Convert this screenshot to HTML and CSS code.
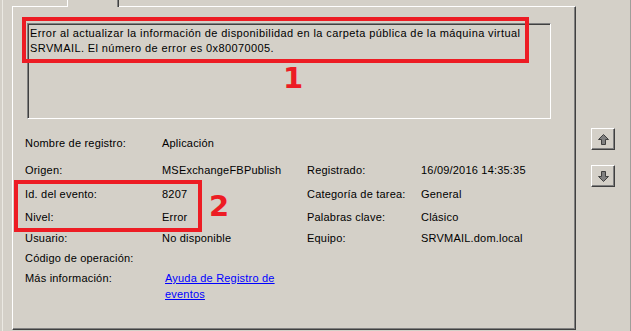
FILE: index.html
```html
<!DOCTYPE html>
<html lang="es">
<head>
<meta charset="utf-8">
<title>Detalles del evento</title>
<link rel="stylesheet" href="styles.css">
</head>
<body>
<div class="window">
  <div class="main">
    <div class="tabstrip"><div class="tab">Detalles</div></div>
    <div class="panel">
      <div class="textbox">
        <p class="message">Error al actualizar la información de disponibilidad en la carpeta pública de la máquina virtual<br>SRVMAIL. El número de error es 0x80070005.</p>
      </div>
      <div class="fields">
        <span class="label">Nombre de registro:</span><span class="value wide">Aplicación</span>
        <span class="label">Origen:</span><span class="value">MSExchangeFBPublish</span><span class="label">Registrado:</span><span class="value">16/09/2016 14:35:35</span>
        <span class="label">Id. del evento:</span><span class="value">8207</span><span class="label">Categoría de tarea:</span><span class="value">General</span>
        <span class="label">Nivel:</span><span class="value">Error</span><span class="label">Palabras clave:</span><span class="value">Clásico</span>
        <span class="label">Usuario:</span><span class="value">No disponible</span><span class="label">Equipo:</span><span class="value">SRVMAIL.dom.local</span>
        <span class="label full">Código de operación:</span>
        <span class="label">Más información:</span><span class="value wide"><a class="help" href="#">Ayuda de Registro de eventos</a></span>
      </div>
      <div class="mark mark-one"></div>
      <div class="num num-one">1</div>
      <div class="mark mark-two"></div>
      <div class="num num-two">2</div>
    </div>
  </div>
  <div class="side">
    <button class="nav" type="button" aria-label="Evento anterior">
      <svg width="11" height="11" viewBox="0 0 11 11"><path d="M5.5 0.5 L10.5 5.5 L7.5 5.5 L7.5 10.5 L3.5 10.5 L3.5 5.5 L0.5 5.5 Z" fill="#808080" stroke="#404040" stroke-width="1" stroke-linejoin="miter"/></svg>
    </button>
    <button class="nav" type="button" aria-label="Evento siguiente">
      <svg width="11" height="11" viewBox="0 0 11 11"><path d="M5.5 10.5 L10.5 5.5 L7.5 5.5 L7.5 0.5 L3.5 0.5 L3.5 5.5 L0.5 5.5 Z" fill="#808080" stroke="#404040" stroke-width="1" stroke-linejoin="miter"/></svg>
    </button>
  </div>
</div>
</body>
</html>
```
FILE: styles.css
```css
html, body {
  margin: 0;
  padding: 0;
  background: #d4d0c8;
  overflow: hidden;
}
body {
  font-family: "Liberation Sans", Arial, sans-serif;
  font-size: 11px;
  letter-spacing: 0.2px;
  color: #000;
}
.window {
  display: flex;
  box-sizing: border-box;
  width: 629px;
  height: 331px;
  margin-left: 2px;
  border-left: 1px solid #ebe9e3;
  border-right: 1px solid #a09e9a;
}
.main {
  margin-left: 9px;
  width: 564px;
  display: flex;
  flex-direction: column;
}
.tabstrip {
  height: 6px;
  display: flex;
  padding-left: 55px;
}
.tab {
  position: relative;
  z-index: 2;
  box-sizing: border-box;
  width: 52px;
  height: 20px;
  margin-top: -13px;
  padding-top: 2px;
  line-height: 15px;
  text-align: center;
  letter-spacing: 0;
  background: #d4d0c8;
  border-left: 1px solid #fff;
  border-right: 1px solid #404040;
  box-shadow: inset -1px 0 #808080;
}
.panel {
  position: relative;
  box-sizing: border-box;
  height: 324px;
  border-top: 1px solid #fff;
  border-left: 1px solid #fff;
  border-right: 1px solid #404040;
  border-bottom: 1px solid #404040;
  box-shadow: inset -1px -1px #808080;
}
.textbox {
  box-sizing: border-box;
  margin: 16px 0 0 14px;
  width: 524px;
  height: 96px;
  padding: 2px 2px 0 2px;
  border-top: 1px solid #808080;
  border-left: 1px solid #808080;
  border-right: 1px solid #fff;
  border-bottom: 1px solid #fff;
  box-shadow: inset 1px 1px #404040;
}
.message {
  margin: 0;
  line-height: 15px;
  letter-spacing: 0.4px;
  white-space: nowrap;
}
.fields {
  margin-top: 16px;
  padding-left: 12px;
  display: grid;
  grid-template-columns: 137px 145px 114px auto;
  grid-template-rows: 27px 24px 23px 21px 20px 20px auto;
  line-height: 16px;
}
.wide {
  grid-column: 2 / 5;
}
.full {
  grid-column: 1 / 5;
}
.help {
  display: inline-block;
  width: 122px;
  margin-left: 3px;
  color: #0000ff;
  text-decoration: underline;
}
.mark {
  position: absolute;
  box-sizing: border-box;
  border: 4px solid #ed1c24;
}
.mark-one {
  left: 9px;
  top: 10px;
  width: 507px;
  height: 46px;
}
.mark-two {
  left: 1px;
  top: 173px;
  width: 188px;
  height: 52px;
}
.num {
  position: absolute;
  font-family: "DejaVu Sans", sans-serif;
  font-weight: bold;
  font-size: 29px;
  line-height: 29px;
  letter-spacing: 0;
  color: #ed1c24;
}
.num-one {
  left: 270px;
  top: 57px;
}
.num-two {
  left: 196px;
  top: 185px;
}
.side {
  margin-left: 15px;
  padding-top: 128px;
  display: flex;
  flex-direction: column;
  gap: 15px;
}
.nav {
  box-sizing: border-box;
  width: 24px;
  height: 22px;
  padding: 0;
  margin: 0;
  display: flex;
  align-items: center;
  justify-content: center;
  background: #d4d0c8;
  border-top: 1px solid #fff;
  border-left: 1px solid #fff;
  border-right: 1px solid #404040;
  border-bottom: 1px solid #404040;
  box-shadow: inset -1px -1px #808080;
}
.nav svg {
  display: block;
}
```
